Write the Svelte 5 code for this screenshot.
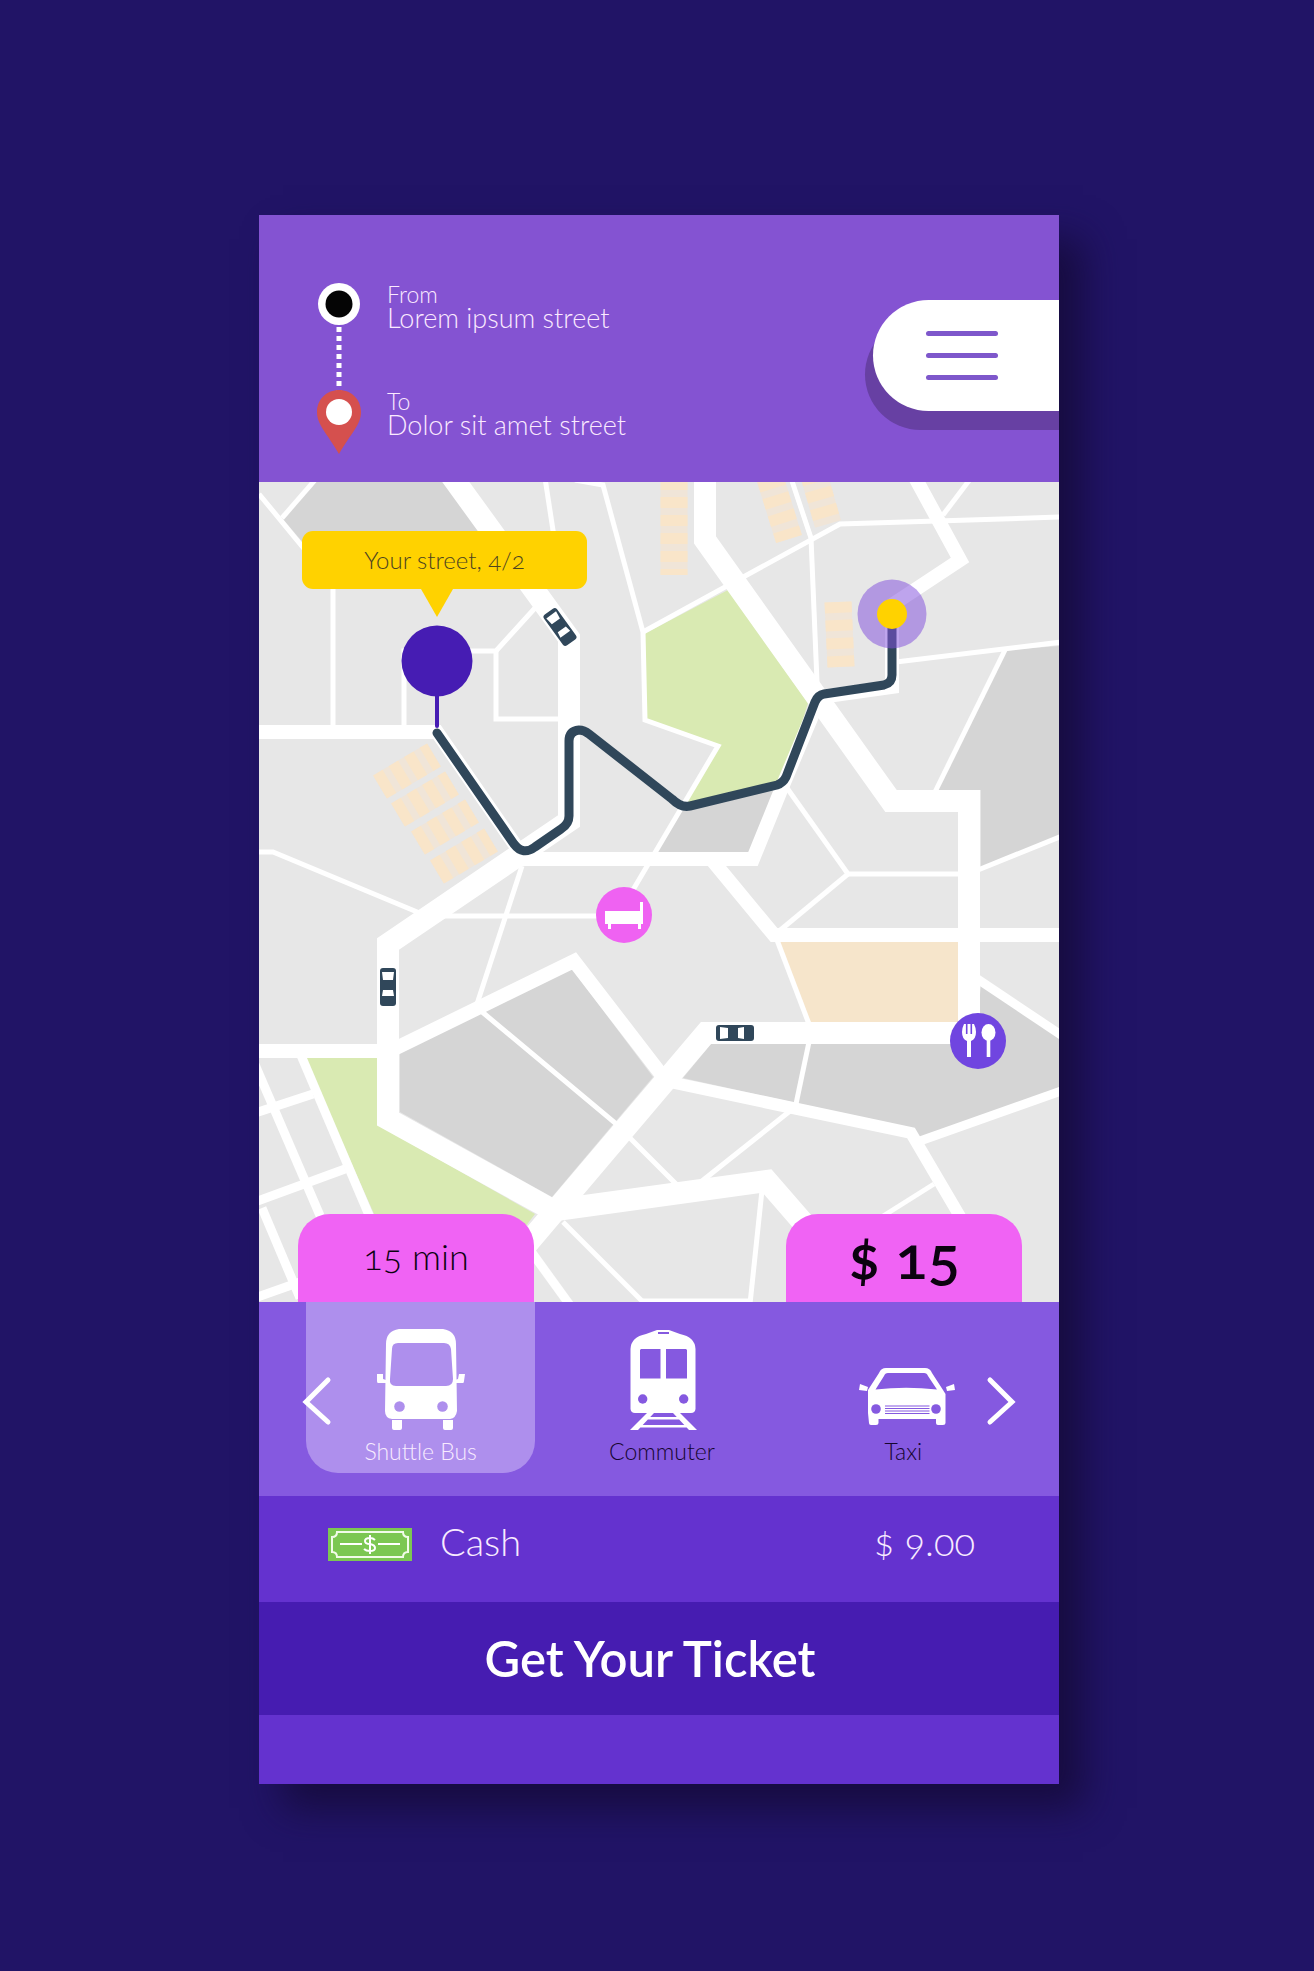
<script>
  const rides = [
    { id: 'bus', name: 'Shuttle Bus' },
    { id: 'train', name: 'Commuter' },
    { id: 'taxi', name: 'Taxi' }
  ];
  let selected = $state(0);

  function step(by) {
    selected = (selected + by + rides.length) % rides.length;
  }

  const cars = [
    { x: 388, y: 987, turn: 0 },
    { x: 560, y: 627, turn: -36 },
    { x: 735, y: 1033, turn: -90 }
  ];

  const thinRoads = [
    'M259 494L333 584V730', 'M282 518L315 480', 'M545 478L556 550',
    'M575 480L603 485L643 632L645 720L718 746L630 895', 'M643 632L840 524L1062 517',
    'M971 478L943 515', 'M791 478L811 538L817 682', 'M896 662L1062 642',
    'M1006 648L935 792', 'M978 870L1062 836', 'M787 788L848 874H962', 'M848 874L778 932',
    'M255 852H273L422 914', 'M440 916H600', 'M522 866L477 1004', 'M404 728V651H496L535 608',
    'M496 651V719H562', 'M777 940L809 1024', 'M809 1042L796 1104', 'M790 1111L702 1181',
    'M762 1190L750 1304', 'M563 1222L643 1302', 'M934 1184L880 1218', 'M481 1011L614 1122L680 1188'
  ];

  const blocks = [
    'M674 479V575', 'M770 478L789 539', 'M813 472L828 524', 'M838 602L841 667',
    'M380 787L434 755', 'M398 815L452 783', 'M418 843L472 811', 'M437 872L491 840'
  ];
</script>

<main>
  <article class="phone">
    <header>
      <svg class="trail" viewBox="0 0 44 172" aria-hidden="true">
        <path d="M22 44V108" stroke="#fff" stroke-width="5" stroke-dasharray="5 4" />
        <circle cx="22" cy="21" r="21" fill="#fff" />
        <circle cx="22" cy="21" r="13.5" fill="#050505" />
        <path d="M22 107C34 107 44 116 44 129C44 142 34 150 22 171C10 150 0 142 0 129C0 116 10 107 22 107Z" fill="#d5504e" />
        <circle cx="22" cy="129" r="13" fill="#fff" />
      </svg>
      <dl class="stops">
        <div><dt>From</dt><dd>Lorem ipsum street</dd></div>
        <div><dt>To</dt><dd>Dolor sit amet street</dd></div>
      </dl>
      <button class="menu" aria-label="Menu"><span></span><span></span><span></span></button>
    </header>

    <section class="map" aria-label="Route map">
      <svg class="streets" viewBox="259 482 800 820" aria-hidden="true">
        <g fill="#d5d5d5">
          <path d="M283 519L316 482H443L490 545H305Z" />
          <path d="M1007 650L1059 646V838L981 868V790H937Z" />
          <path d="M684 805L781 784L748 854H656Z" />
          <path d="M400 1053L480 1012L572 969L653 1077L552 1197L400 1112Z" />
          <path d="M711 1044L975 1036L981 986L1059 1037V1092L921 1139L912 1129L683 1078Z" />
        </g>
        <g fill="#d9eab2">
          <path d="M644 634L728 590L808 703L783 784L684 805L718 746L646 720Z" />
          <path d="M304 1056H380V1126L535 1214L500 1260L390 1250Z" />
        </g>
        <path d="M779 940H960V1024H811Z" fill="#f6e5cb" />
        {#each blocks as d}
          <path class="block" {d} />
          <path class="block houses" {d} />
        {/each}
        <g class="road thin">
          {#each thinRoads as d}<path {d} />{/each}
          <path d="M643 1301H750" />
        </g>
        <g class="road small">
          <path d="M300 1053L400 1288" /><path d="M250 1053L340 1262" /><path d="M262 1208L300 1298" />
          <path d="M255 1113L313 1094" /><path d="M255 1202L345 1169" /><path d="M255 1298L300 1282" />
          <path d="M920 1141L1064 1090" /><path d="M970 974L1064 1037" /><path d="M530 1250L572 1308" />
        </g>
        <path class="road middle" d="M665 1081L911 1133L985 1259" />
        <g class="road medium">
          <path d="M255 732H437L520 852" />
          <path d="M911 470L960 560L892 605V687L820 697L783 785L753 859H515" />
          <path d="M712 860L774 935H1062" /><path d="M255 1051H388" />
          <path d="M388 1052L574 961L664 1078" />
        </g>
        <g class="road wide">
          <path d="M450 474L569 638V821L388 944V1119L556 1212" />
          <path d="M705 476V540L891 801H969V1033H706L500 1276" />
          <path d="M556 1210L767 1181L820 1242" />
        </g>
        <path class="route" d="M437 733L514 844Q523 856 535 847L561 829Q569 824 569 816V741Q569 731 579 730Q584 730 589 734L672 799Q681 808 690 806L777 785Q783 783 786 777L815 702Q818 695 824 694L884 685Q892 683 892 675V620" />
        {#each cars as car}
          <g transform="translate({car.x} {car.y}) rotate({car.turn})">
            <rect x="-8" y="-19" width="16" height="38" rx="3" fill="#30475a" />
            <path d="M-6 -15H6L5 -7H-5ZM-5 3H5L6 9H-6Z" fill="#fff" />
          </g>
        {/each}
        <path d="M437 690V726" stroke="#461cb3" stroke-width="4" stroke-linecap="round" />
        <circle cx="437" cy="661" r="35.5" fill="#461cb3" />
        <circle cx="892" cy="614" r="34.5" fill="#8350dc" fill-opacity=".52" />
        <circle cx="892" cy="614" r="15" fill="#ffd200" />
        <circle cx="624" cy="915" r="28" fill="#ef62f2" />
        <path d="M605 911H640V902H643V924H641V929H638V924H611V929H608V924H605Z" fill="#fff" />
        <circle cx="978" cy="1041" r="28" fill="#7045e0" />
        <path d="M964 1024H974Q976 1028 976 1032Q976 1039 971 1041V1057H967V1041Q962 1039 962 1032Q962 1028 964 1024Z" fill="#fff" />
        <path d="M966.7 1023V1034M971.3 1023V1034" stroke="#7045e0" stroke-width="1.6" />
        <ellipse cx="988.5" cy="1032.5" rx="7" ry="8.5" fill="#fff" />
        <path d="M988.5 1036V1057" stroke="#fff" stroke-width="3.6" />
      </svg>
      <p class="tooltip">Your street, 4/2</p>
      <div class="tabs">
        <p class="tab time">15 min</p>
        <p class="tab price">$ 15</p>
      </div>
    </section>

    <section class="rides" aria-label="Transport">
      {#each rides as ride, i}
        <button class="ride" class:selected={selected === i} aria-pressed={selected === i} onclick={() => (selected = i)}>
          {#if ride.id === 'bus'}
            <svg viewBox="0 0 100 102" aria-hidden="true">
              <path fill="#fff" d="M28 0H72Q85 2 85 15L86 82Q85 89 79 90H21Q14 89 14 82L15 15Q15 2 28 0Z" />
              <path fill="#fff" d="M6 45H12V50L15 51V54H7Q6 54 6 52ZM94 45H88L87 50L84 51V54H92Q93 54 93 52ZM21 91H31V99Q31 101 29 101H23Q21 101 21 99ZM72 91H82V99Q82 101 80 101H74Q72 101 72 99Z" />
              <path class="glass" d="M27 14H73Q79 14 80 20L82 50Q82 57 75 57H25Q18 57 19 50L21 20Q21 14 27 14Z" />
              <circle class="glass" cx="28.5" cy="77.5" r="5.3" /><circle class="glass" cx="71.5" cy="77.5" r="5.3" />
            </svg>
          {:else if ride.id === 'train'}
            <svg viewBox="0 0 100 102" aria-hidden="true">
              <path fill="#fff" d="M45 1H57L68 5Q83 8 83.500 20V80Q83 84 79 84H23Q19 84 18.500 80V20Q19 8 34 5Z" />
              <path class="glass" d="M29 20H48.500V49.500H28V21ZM54 20H74L75 21V49.500H54ZM46 3H57V5H46Z" />
              <circle class="glass" cx="30.7" cy="70" r="4.700" /><circle class="glass" cx="71.7" cy="70" r="4.700" />
              <path fill="#fff" d="M35 84H42L26 101H18ZM61 84H68L85 101H77ZM35 88H68V90.500H35ZM27 96H76V98.500H27Z" />
            </svg>
          {:else}
            <svg viewBox="0 0 100 102" aria-hidden="true">
              <path fill="#fff" d="M33 39H72Q77 39 79 44L90 61L92.500 65V94Q92.500 96 90 96H85Q83 96 83 94V90H25.500V94Q25.500 96 23 96H18Q16 96 16 94L15 84V61L26 44Q28 39 33 39ZM7 55L15 58L14 62L6 61ZM101 55L93 58L94 62L102 61Z" />
              <path class="glass" d="M35 44H71Q74 44 75 47L84 60.500Q53 57 22.500 60.500L31 47Q32 44 35 44Z" />
              <path class="grille" d="M32 77H76.500M32 79.500H76.500M32 82H76.500M32 84.500H76.500" />
              <circle class="glass" cx="23" cy="80" r="4.800" /><circle class="glass" cx="83" cy="80" r="4.800" />
            </svg>
          {/if}
          <span>{ride.name}</span>
        </button>
      {/each}
      <button class="arrow prev" aria-label="Previous" onclick={() => step(-1)}>
        <svg viewBox="0 0 28 48" aria-hidden="true"><path d="M25 3L3 25L25 45" /></svg>
      </button>
      <button class="arrow next" aria-label="Next" onclick={() => step(1)}>
        <svg viewBox="0 0 28 48" aria-hidden="true"><path d="M3 3L25 25L3 45" /></svg>
      </button>
    </section>

    <section class="payment" aria-label="Payment">
      <svg viewBox="0 0 84 33" aria-hidden="true">
        <path d="M0 0H84V33H0Z" fill="#7cc752" />
        <path d="M9 4H75Q75 9 80 9V24Q75 24 75 29H9Q9 24 4 24V9Q9 9 9 4Z" fill="none" stroke="#f2fbe9" stroke-width="2" />
        <path d="M12 16H34M50 16H72" stroke="#fff" stroke-width="2" />
        <path d="M47 12Q45 10 42 10Q37 10 37 13Q37 16 42 16Q47 17 47 20Q47 23 42 23Q38 23 36 21M42 7V26" fill="none" stroke="#fff" stroke-width="2" />
      </svg>
      <span>Cash</span>
      <span class="amount">$ 9.00</span>
    </section>

    <button class="buy">Get Your Ticket</button>
    <footer></footer>
  </article>
</main>

<style>
  :global(body) {
    margin: 0;
    background: #211466;
  }
  main {
    display: flex;
    justify-content: center;
    padding: 215px 20px 186px 24px;
    font-family: Lato, 'Open Sans', sans-serif;
    font-weight: 300;
    font-variant-numeric: oldstyle-nums;
  }
  button {
    border: 0;
    padding: 0;
    font: inherit;
    cursor: pointer;
  }
  svg {
    display: block;
    overflow: visible;
  }
  p,
  dl,
  dd {
    margin: 0;
  }
  .phone {
    width: 100%;
    max-width: 800px;
    box-shadow: 24px 24px 36px #170c40;
  }
  header {
    display: flex;
    align-items: flex-start;
    gap: 26px;
    height: 267px;
    padding-left: 58px;
    box-sizing: border-box;
    overflow: hidden;
    background: #8453d2;
    color: #fbeaff;
  }
  .trail {
    width: 44px;
    margin-top: 68px;
  }
  .stops {
    display: grid;
    gap: 59px;
    margin-top: 67px;
    line-height: 24px;
  }
  dt {
    font-size: 23px;
  }
  dd {
    font-size: 27px;
  }
  .menu {
    display: flex;
    flex-direction: column;
    justify-content: center;
    gap: 17px;
    width: 186px;
    height: 111px;
    margin: 85px 0 0 auto;
    padding-left: 53px;
    border-radius: 56px 0 0 56px;
    background: #fff;
    box-shadow:
      -8px 19px 0 #6740a3,
      0 19px 0 #6740a3;
  }
  .menu span {
    width: 72px;
    height: 5px;
    border-radius: 3px;
    background: #7e57cb;
  }
  .map {
    position: relative;
    overflow: hidden;
    background: #e7e7e7;
  }
  .streets {
    width: 100%;
    overflow: hidden;
  }
  .road {
    fill: none;
    stroke: #fff;
  }
  .thin {
    stroke-width: 5;
  }
  .small {
    stroke-width: 9;
  }
  .middle {
    stroke-width: 12;
  }
  .medium {
    stroke-width: 14;
  }
  .wide {
    stroke-width: 22;
  }
  .block {
    fill: none;
    stroke: #f0e5d8;
    stroke-width: 27;
  }
  .houses {
    stroke: #f9e5c9;
    stroke-dasharray: 11 7;
  }
  .route {
    fill: none;
    stroke: #30475a;
    stroke-width: 9;
    stroke-linecap: round;
  }
  .tooltip {
    position: absolute;
    top: 49px;
    left: 43px;
    width: 285px;
    border-radius: 11px;
    background: #ffd200;
    color: #4d4420;
    font-size: 24px;
    line-height: 58px;
    text-align: center;
  }
  .tooltip::after {
    content: '';
    position: absolute;
    top: 100%;
    left: 119px;
    border: 16px solid transparent;
    border-top: 28px solid #ffd200;
    border-bottom: 0;
  }
  .tabs {
    position: absolute;
    inset: auto 37px 0 39px;
    display: flex;
    justify-content: space-between;
  }
  .tab {
    width: 236px;
    height: 88px;
    border-radius: 32px 32px 0 0;
    background: #f063f4;
    color: #0c0210;
    line-height: 84px;
    text-align: center;
  }
  .time {
    font-size: 36px;
  }
  .price {
    font-size: 60px;
    font-weight: 600;
  }
  .rides {
    position: relative;
    display: grid;
    grid-template-columns: repeat(3, 1fr);
    gap: 12px;
    padding: 0 41px 23px 47px;
    background: #8559e0;
  }
  .ride {
    --glass: #8559e0;
    display: flex;
    flex-direction: column;
    align-items: center;
    gap: 6px;
    height: 171px;
    padding-top: 27px;
    border-radius: 0 0 32px 32px;
    box-sizing: border-box;
    background: none;
    color: #15052e;
    font-size: 23px;
    line-height: 28px;
  }
  .ride svg {
    width: 100px;
  }
  .selected {
    --glass: #ae8fed;
    background: #ae8fed;
    color: #f8ebff;
  }
  .glass {
    fill: var(--glass);
  }
  .grille {
    stroke: var(--glass);
    stroke-width: 1;
  }
  .arrow {
    position: absolute;
    top: 75px;
    width: 28px;
    background: none;
  }
  .arrow path {
    fill: none;
    stroke: #fff;
    stroke-width: 5;
    stroke-linecap: round;
  }
  .prev {
    left: 44px;
  }
  .next {
    right: 44px;
  }
  .payment {
    display: flex;
    align-items: center;
    gap: 28px;
    height: 106px;
    padding: 0 84px 10px 69px;
    box-sizing: border-box;
    background: #6432cf;
    color: #f8ebff;
    font-size: 38px;
    line-height: 40px;
  }
  .payment span {
    padding-bottom: 6px;
  }
  .payment svg {
    width: 84px;
  }
  .amount {
    margin-left: auto;
  }
  .buy {
    display: block;
    width: 100%;
    height: 113px;
    padding: 0 18px 2px 0;
    background: #461cb1;
    color: #fff;
    font-size: 49px;
    font-weight: 600;
  }
  footer {
    height: 69px;
    background: #6432cf;
  }
</style>
